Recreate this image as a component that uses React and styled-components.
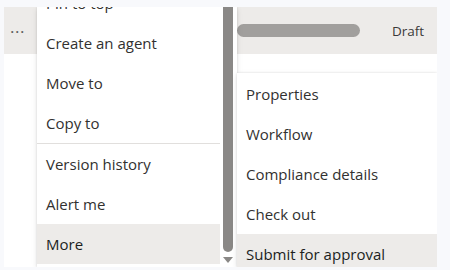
import React from 'react';
import styled, { createGlobalStyle, css } from 'styled-components';

const textColor = '#323130';
const hoverGrey = '#edebe9';
const thumbGrey = '#8a8886';

const GlobalStyle = createGlobalStyle`
  html, body {
    margin: 0;
    background: #f8f9fc;
  }
  body {
    font-family: "Segoe UI", "Open Sans", sans-serif;
    color: ${textColor};
  }
`;

const Page = styled.div`
  width: 450px;
  height: 270px;
  padding: 7px 13px 3px 4px;
  box-sizing: border-box;
  overflow: hidden;
`;

const Frame = styled.div`
  position: relative;
  height: 100%;
  background: #fff;
  overflow: hidden;
`;

const TopBar = styled.div`
  display: grid;
  grid-template-columns: 233px 123px auto;
  align-items: center;
  height: 47px;
  background: ${hoverGrey};
`;

const Dots = styled.span`
  padding-left: 6px;
  font-size: 17px;
  letter-spacing: 0.5px;
  color: #605e5c;
  line-height: 1;
  margin-top: -8px;
`;

const Pill = styled.div`
  height: 13px;
  border-radius: 7px;
  background: #a19f9d;
`;

const Status = styled.span`
  margin-left: 32px;
  font-size: 13.5px;
  color: #3b3a39;
`;

const MenuBase = css`
  position: absolute;
  background: #fff;
  overflow: hidden;
  box-shadow: 0 0 2px rgba(0, 0, 0, 0.12), 0 2px 6px rgba(0, 0, 0, 0.1);
`;

const Menu = styled.div`
  ${MenuBase};
  display: flex;
  left: 33px;
  top: 0;
  bottom: 0;
  width: 200px;
`;

const SubMenu = styled.div`
  ${MenuBase};
  left: 233px;
  top: 66px;
  bottom: 0;
  width: 200px;
  padding-top: 1px;
`;

const MenuList = styled.ul`
  list-style: none;
  margin: ${p => p.$offset || 0}px 0 0;
  padding: 0;
  width: ${p => p.$width || '100%'};
  flex: none;
`;

const Item = styled.li`
  display: flex;
  align-items: center;
  justify-content: space-between;
  height: 40px;
  padding-left: 9px;
  font-size: 15px;
  white-space: nowrap;
  overflow: hidden;
  background: ${p => (p.$active ? hoverGrey : 'transparent')};
  color: ${p => (p.$active ? '#201f1e' : textColor)};
`;

const Divider = styled.li`
  height: 1px;
  background: #e1dfdd;
`;

const Chevron = styled.svg`
  width: 8px;
  height: 12px;
  margin-right: -7px;
  flex: none;
`;

const ScrollTrack = styled.div`
  display: flex;
  flex-direction: column;
  align-items: center;
  gap: 5px;
  width: 10px;
  padding: 0 2px 0 3px;
  flex: none;
`;

const Thumb = styled.div`
  width: 10px;
  height: 245px;
  border-radius: 0 0 5px 5px;
  background: ${thumbGrey};
`;

const Arrow = styled.div`
  width: 0;
  height: 0;
  border-left: 5px solid transparent;
  border-right: 5px solid transparent;
  border-top: 6px solid ${thumbGrey};
`;

const mainItems = ['Pin to top', 'Create an agent', 'Move to', 'Copy to'];
const lowerItems = ['Version history', 'Alert me'];
const subItems = ['Properties', 'Workflow', 'Compliance details', 'Check out'];

const App = () => {
  return (
    <Page>
      <GlobalStyle />
      <Frame>
        <TopBar>
          <Dots>...</Dots>
          <Pill />
          <Status>Draft</Status>
        </TopBar>

        <Menu>
          <MenuList $offset={-24} $width="183px">
            {mainItems.map(label => <Item key={label}>{label}</Item>)}
            <Divider />
            {lowerItems.map(label => <Item key={label}>{label}</Item>)}
            <Item $active>
              More
              <Chevron viewBox="0 0 8 12">
                <path d="M1.5 1 L6.5 6 L1.5 11" fill="none" stroke="#605e5c" strokeWidth="1.2" />
              </Chevron>
            </Item>
          </MenuList>
          <ScrollTrack>
            <Thumb />
            <Arrow />
          </ScrollTrack>
        </Menu>

        <SubMenu>
          <MenuList>
            {subItems.map(label => <Item key={label}>{label}</Item>)}
            <Item $active>Submit for approval</Item>
          </MenuList>
        </SubMenu>
      </Frame>
    </Page>
  );
};

export default App;
